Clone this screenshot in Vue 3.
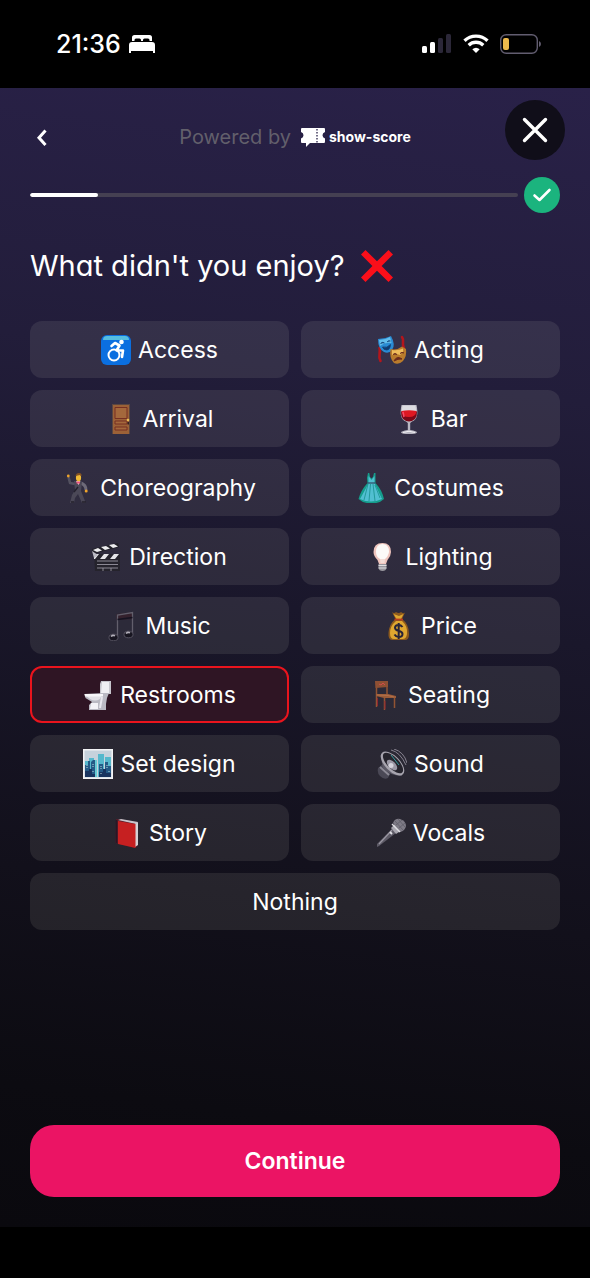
<template>
  <div class="screen">
    <div class="status-bar">
      <div class="status-left">
        <span class="time">21:36</span>
        <svg width="26" height="20" viewBox="0 0 26 20" fill="#fff" aria-hidden="true">
          <path d="M3 7V3.500Q3 1 5.500 1H20.500Q23 1 23 3.500V7H20.500V6Q20.500 4.500 19 4.500H15.500Q14 4.500 14 6V7H12V6Q12 4.500 10.500 4.500H7Q5.500 4.500 5.500 6V7Z" />
          <path d="M0 11Q0 8 3 8H23Q26 8 26 11V19H24V17H2V19H0Z" />
        </svg>
      </div>
      <div class="status-right">
        <svg width="30" height="20" viewBox="0 0 30 20" aria-hidden="true">
          <rect x="0" y="12" width="5" height="7" rx="1.500" fill="#fff" />
          <rect x="8" y="8" width="5" height="11" rx="1.500" fill="#fff" />
          <rect x="16" y="4" width="5" height="15" rx="1.500" fill="#2b2738" />
          <rect x="24" y="0" width="5" height="19" rx="1.500" fill="#2b2738" />
        </svg>
        <svg width="26" height="20" viewBox="0 0 26 20" fill="none" stroke="#fff" stroke-width="3.300" aria-hidden="true">
          <path d="M1.500 6.700A16.500 16.500 0 0 1 24.500 6.700" />
          <path d="M5.700 11.200A10.500 10.500 0 0 1 20.300 11.200" />
          <path d="M13 19L9.300 15.300Q13 12 16.700 15.300Z" fill="#fff" stroke="none" />
        </svg>
        <svg width="42" height="20" viewBox="0 0 42 20" aria-hidden="true">
          <rect x="0.700" y="0.700" width="36.600" height="18.600" rx="5.500" fill="none" stroke="#625d70" stroke-width="1.400" />
          <rect x="3" y="4" width="6" height="12" rx="2" fill="#edb94c" />
          <path d="M39 7Q41 8 41 10T39 13Z" fill="#625d70" />
        </svg>
      </div>
    </div>

    <main class="survey">
      <header class="survey-header">
        <button class="back" type="button" aria-label="Back">
          <svg width="32" height="46" viewBox="0 0 32 46" fill="none" stroke="#fff" stroke-width="3">
            <path d="M15.500 16.500L9 23.800L15.500 31" />
          </svg>
        </button>
        <div class="brand">
          <span class="powered">Powered by</span>
          <svg width="24" height="20" viewBox="0 0 24 20" aria-hidden="true">
            <path fill="#fff" d="M1 1H23Q24 1 24 2V5Q21.500 6 21.500 8.200T24 11.500V14.500Q24 16 23 16H9L5 20V16H1Q0 16 0 15V11.500Q2.500 10.500 2.500 8.200T0 5V2Q0 1 1 1Z" />
            <path d="M16 2V16" stroke="#292148" stroke-width="1.300" stroke-dasharray="1.500 1.500" />
          </svg>
          <span class="brand-name">show-score</span>
        </div>
        <button class="close" type="button" aria-label="Close">
          <svg width="60" height="60" viewBox="0 0 60 60" fill="none" stroke="#fff" stroke-width="3.400" stroke-linecap="round">
            <path d="M19.500 19.500L40.500 40.500M40.500 19.500L19.500 40.500" />
          </svg>
        </button>
      </header>

      <div class="progress">
        <div class="track">
          <div class="track-fill" :style="{ width: progress + '%' }"></div>
        </div>
        <svg width="36" height="36" viewBox="0 0 36 36" aria-hidden="true">
          <circle cx="18" cy="18" r="18" fill="#1bb47e" />
          <path d="M10.500 18.500L15.500 23L25.500 13" fill="none" stroke="#fff" stroke-width="2.600" stroke-linecap="round" stroke-linejoin="round" />
        </svg>
      </div>

      <h1 class="question">
        What didn't you enjoy?
        <svg width="34" height="34" viewBox="0 0 34 34" aria-hidden="true">
          <path d="M5.500 1L17 12.300L28.500 1L33 5.500L21.600 17L33 28.500L28.500 33L17 21.700L5.500 33L1 28.500L12.400 17L1 5.500Z" fill="#fa0f1a" />
        </svg>
      </h1>

      <div class="options">
        <button
          v-for="option in options"
          :key="option.label"
          type="button"
          class="option"
          :class="{ selected: selected.includes(option.label), wide: !option.icon }"
          :aria-pressed="selected.includes(option.label)"
          @click="toggle(option.label)"
        >
          <svg v-if="option.icon" width="30" height="30" viewBox="0 0 30 30" aria-hidden="true" v-html="option.icon"></svg>
          <span>{{ option.label }}</span>
        </button>
      </div>

      <button class="continue" type="button">Continue</button>
    </main>
  </div>
</template>

<script setup>
import { ref } from 'vue'

const progress = 14
const selected = ref(['Restrooms'])

const options = [
  {
    label: 'Access',
    icon: `<rect width="30" height="30" rx="6" fill="#0b6fe0"/>
      <path d="M2 5Q2 1 6 1H24Q28 1 28 5Z" fill="#55bde0"/>
      <circle cx="20.500" cy="7" r="2.300" fill="#fff"/>
      <circle cx="13" cy="20" r="5.500" fill="none" stroke="#fff" stroke-width="2"/>
      <path d="M10.500 11L14 8L18.500 10.500L15.500 15.500H22L21 22" fill="none" stroke="#fff" stroke-width="2.600" stroke-linecap="round" stroke-linejoin="round"/>`,
  },
  {
    label: 'Acting',
    icon: `<path d="M2.500 13C4 18 .5 21 3.500 26M25 2C28 6 24 9 27 13" fill="none" stroke="#b3161c" stroke-width="2.600" stroke-linecap="round"/>
      <path d="M1 4Q8 4 14 1Q19 10 15 15Q12 19 7 17Q1 14 1 4Z" fill="#2a8bd3"/>
      <path d="M2 5Q8 5 13 2Q14 5 14.500 8Q8 7 3 11Z" fill="#62bdeb"/>
      <path d="M3.500 8.500Q5.500 6.500 7.500 8M10 7Q11.500 5 13.500 6M5.500 12Q10 13.500 13.500 9.500Q13 15 9.500 15Q6.500 15 5.500 12Z" fill="#103c72" stroke="#103c72" stroke-width=".8"/>
      <path d="M13.500 14Q20 15.500 25 11.500L29 14Q30 21 26 26Q22 30 17 28Q12 23 13.500 14Z" fill="#b97b2c"/>
      <path d="M15 15Q21 16 26 13.500Q27 18 23 20Q18 18 15 20Z" fill="#efbc5b"/>
      <path d="M16 19.500Q18 17.500 20 19.500M23 18.500Q25 16.500 27 18M17 26Q20 20 25 24Q21 23.500 17 26Z" fill="#6b2b1c" stroke="#6b2b1c" stroke-width="1"/>`,
  },
  {
    label: 'Arrival',
    icon: `<rect x="6" y="0" width="18" height="30" fill="#5b4640"/>
      <rect x="7" y="1" width="16" height="29" fill="#9c6137"/>
      <path d="M9 3.500H21V14.500H9ZM9 17H21V20H9ZM9 23H21V26H9Z" fill="#a4683c" stroke="#762f22" stroke-width="1"/>
      <circle cx="22" cy="16" r="1.300" fill="#edbe55"/><rect x="21.500" y="18" width="1.500" height="2.500" fill="#351f22"/>`,
  },
  {
    label: 'Bar',
    icon: `<path d="M7.500 1H22.500Q25.500 15 18 17.500L16.200 19V26Q23 27 23 28.500Q22 30 15 30T7 28.500Q7 27 13.800 26V19L12 17.500Q4.500 15 7.500 1Z" fill="#b9b7c2"/>
      <path d="M8.500 1.500H21.500L22.300 7H7.700Z" fill="#dddce1"/>
      <path d="M7 7.500H23Q23.500 16.500 15 17.500Q6.500 16.500 7 7.500Z" fill="#7c0818"/>
      <path d="M7.500 7Q15 5.500 22.500 7Q22 13 15 13T7.500 7Z" fill="#de1822"/>
      <path d="M9 8L10 13" stroke="#fa4a69" stroke-width="1.500"/><path d="M9 28.500Q15 26 21 28.500" stroke="#f4f3f7" fill="none"/>`,
  },
  {
    label: 'Choreography',
    icon: `<path d="M12 11L7 10L5.500 4" fill="none" stroke="#53515f" stroke-width="2.600" stroke-linejoin="round"/>
      <path d="M18 10Q23 12 23 17" fill="none" stroke="#6d6a78" stroke-width="3"/>
      <path d="M11 8L19 9L18 18L22 28L23 30H19L15 21L12 25L11 30H7L9 22L12 17Z" fill="#4b4857"/>
      <path d="M13 8H17.500L15.500 12Z" fill="#f4cfda"/><path d="M13.500 9.500H17" stroke="#e9527d" stroke-width="2"/>
      <ellipse cx="15.500" cy="4.700" rx="2.600" ry="3.500" fill="#efb936"/>
      <path d="M12.500 3Q13 0 16 0T18.500 3L17 2Z" fill="#855222"/>
      <circle cx="5.300" cy="3" r="1.400" fill="#efa42b"/><circle cx="23.200" cy="18" r="1.500" fill="#efa42b"/>
      <path d="M11 19L15 14M8 29H11M19 29H23" stroke="#24212d" stroke-width="1.400"/>`,
  },
  {
    label: 'Costumes',
    icon: `<path d="M11 0H12.300L13 4L14.500 5.500L16 4L17 0H18.500V10Q25 17 27 26Q22 31 14.500 30Q7 31 1.500 26Q4 17 10.500 10L10 5Z" fill="#159d8c"/>
      <path d="M11.500 3L14.500 7L17.500 3V10L23 22L25 26Q14 31 3 26L8 17L11.500 10Z" fill="#51bfd1"/>
      <path d="M11 11L7 27M13.500 11L12 28M16 11L18 28M18 12L23 25" stroke="#178f8d" stroke-width=".8"/>
      <path d="M10.500 10H18.500" stroke="#30516b" stroke-width="1.300"/>`,
  },
  {
    label: 'Direction',
    icon: `<path d="M0 7L26 1L27 5L1 12Z" fill="#23222a"/>
      <path d="M1 8L6 6L10 8.500L5 10ZM9 5L14 4L18 6.500L13 8ZM17 3L22 2L26 4.500L21 6Z" fill="#eeeef0"/>
      <path d="M2 12H28V29H3Z" fill="#25232c"/>
      <path d="M2 12H7L3 17H2ZM12 12H17L13 17H8ZM22 12H27L23 17H18Z" fill="#e5e5e8"/>
      <path d="M0 9L6 13L2 16Z" fill="#bbbac3"/>
      <path d="M5 19H26M5 22.500H26M5 26H26M11 26V29M19 26V29" stroke="#97949f" stroke-width=".9"/>`,
  },
  {
    label: 'Lighting',
    icon: `<path d="M14.500 1Q23 1 23 10Q23 14 19.500 18L18 22H11L9.500 18Q5.500 14 5.500 10Q5.500 1 14.500 1Z" fill="#efc5be"/>
      <path d="M14.500 2Q21 2 21 10Q20 15 17 17H12Q8 15 8 10Q8 2 14.500 2Z" fill="#fcfaf8"/>
      <path d="M12 17H17L16.500 21H12.500Z" fill="#f3dcd6"/>
      <path d="M10.500 22H18.500V26Q18 29 14.500 29T10.500 26Z" fill="#98969d"/><path d="M10.500 23.500H18.500M10.500 26H18.500" stroke="#dedde1" stroke-width="1"/>`,
  },
  {
    label: 'Music',
    icon: `<path d="M8.500 3L25 1V8L8.500 9Z" fill="#34212d"/>
      <path d="M9.500 26V4L24.500 1.500V23" fill="none" stroke="#625f6c" stroke-width="1.300"/>
      <path d="M9.500 8.500L24.500 6.500" stroke="#151321" stroke-width="1.500"/>
      <ellipse cx="5.500" cy="26.500" rx="4.500" ry="3.300" fill="#171520" stroke="#555260"/>
      <ellipse cx="20.500" cy="23.500" rx="4.500" ry="3.300" fill="#171520" stroke="#555260"/>
      <path d="M3 25.500Q5 23.500 7 25M18 22.500Q20 20.500 22 22" fill="none" stroke="#b4b1bb" stroke-width="1.500"/>`,
  },
  {
    label: 'Price',
    icon: `<path d="M8 1Q10 3 12 1Q15 3 17 1Q19 3 21 1.500L18 8Q25 13 25 23Q25 29 21 29H8Q4 29 4.500 22Q5 13 11.500 8Z" fill="#8d5a1d"/>
      <path d="M9.500 3L12.500 8H17L19.500 3L15 5ZM12 10H18Q23.500 15 23 22Q23 27.500 19 28H10Q6 28 6 22Q6 15 12 10Z" fill="#dfa730"/>
      <path d="M10.500 8.500H19" stroke="#b83b1f" stroke-width="1.800"/>
      <path d="M18.500 16Q17 14 14.500 14Q11 14 11 16.800Q11 19 14.700 20Q18.500 20.800 18.500 23Q18.500 26 14.700 26Q12 26 10.500 23.500M14.700 12V28" fill="none" stroke="#282438" stroke-width="2"/>`,
  },
  {
    label: 'Restrooms',
    icon: `<path d="M18 1H28V14H17V4Z" fill="#c7c6cd"/><path d="M19 2H26V13H18Z" fill="#f0eff3"/>
      <path d="M20 13H26L24 18L23 24V30H6V25L9 22L2.500 18L1.500 14Z" fill="#bab9c3"/>
      <path d="M2 15H19L17 19Q12 22 7 19Z" fill="#e2e1e7"/>
      <path d="M1.500 14H20V16.500H2Z" fill="#f8f7fa"/>
      <path d="M8 23H15V29H7Z" fill="#f3f2f7"/><path d="M19 17L17 28" stroke="#e8e7ee" stroke-width="2"/>`,
  },
  {
    label: 'Seating',
    icon: `<path d="M5.500 1.500V27M16 1.500V15M13.500 18V30M23.500 16V28" fill="none" stroke="#925433" stroke-width="1.500"/>
      <path d="M4 1H17V7L4.500 8Z" fill="#8e5033"/><path d="M5 14H17L25 16V18L13 18L5 16Z" fill="#9c5c38"/>
      <path d="M6 15L17 15.500L23 17" fill="none" stroke="#b1714b"/>
      <path d="M8 4L10 5L12 3L14 5" fill="none" stroke="#d14b4a"/><path d="M6.500 18V26M14 21V29" stroke="#8e2531" stroke-width="1"/>`,
  },
  {
    label: 'Set design',
    icon: `<rect width="30" height="30" fill="#f2f3f5"/><rect x="1.500" y="1.500" width="27" height="27" fill="#c6d2dc"/>
      <path d="M2 12H6V9H11V28H2ZM15 5H21V28H15ZM22 8H28V28H22Z" fill="#55b8cc"/>
      <path d="M2 16H5V12H7V28H2ZM8 13L10 11H12V28H8ZM16 15H20V28H16ZM22 13H25V17H28V28H22Z" fill="#245a86"/>
      <path d="M2 22H6V20H9V25H13V28H2ZM16 23H20V20H23V24H28V28H16Z" fill="#19345f"/>
      <path d="M4 16V19M10 15V18M18 17V20M24 16V19M10 22V24M18 24V26M26 22V24" stroke="#b8d9dc" stroke-width="1" stroke-dasharray="1 1"/>
      <path d="M13 11V28" stroke="#67cad3" stroke-width="2"/>`,
  },
  {
    label: 'Sound',
    icon: `<path d="M1 19L6 15L14 23L11 29Q7 31 3 27Q0 24 1 19Z" fill="#4a4855"/>
      <path d="M3 18L12 26" stroke="#8c8995" stroke-width="2"/>
      <path d="M3.500 6L6 19Q12 26 25 27L20 17Z" fill="#5d5a67"/>
      <ellipse cx="15.500" cy="14.500" rx="15" ry="7.500" transform="rotate(46 15.500 14.500)" fill="#a7a4ae"/>
      <ellipse cx="16" cy="14" rx="13.200" ry="5.800" transform="rotate(46 16 14)" fill="#26242d"/>
      <ellipse cx="15" cy="16" rx="6.500" ry="3.500" transform="rotate(46 15 16)" fill="#9b98a5"/>
      <circle cx="14" cy="16.500" r="2.500" fill="#d5d3dc"/>
      <path d="M14 1Q23 3 29 16M17 0Q27 3 30 14" fill="none" stroke="#85818e" stroke-width="1"/>
      <path d="M14 6L22 16" stroke="#369a9d" stroke-width="1"/>`,
  },
  {
    label: 'Story',
    icon: `<path d="M4 1L6 1L26 4V28L23 30L3.500 25Z" fill="#511c29"/>
      <path d="M6 2L9 1L26 4L24 6Z" fill="#c8c4cb"/><path d="M23 6L26 4V27L23 29Z" fill="#d4d1d5"/>
      <path d="M6 3L23.500 6V30L6 26Z" fill="#c62021"/><path d="M4.500 2V25" stroke="#281725" stroke-width="1.500"/>`,
  },
  {
    label: 'Vocals',
    icon: `<path d="M16 11L20 15L3 28L1 29L1 26Z" fill="#5e5b67"/>
      <path d="M16 12L3 26" stroke="#9a97a2" stroke-width="1.200"/>
      <path d="M15 10L20 5L26 12L20 16Z" fill="#a8a6af"/>
      <path d="M17 5Q19 0 24 1Q30 3 30 8Q29 13 24 14Z" fill="#7e7b86"/>
      <path d="M19 3L27 12M22 1L29 9M20 7L26 2M23 10L29 5" stroke="#605e68" stroke-width=".8"/>
      <path d="M16 6L24 14" stroke="#e0dfe4" stroke-width="1.500"/>
      <path d="M14 14L16 16" stroke="#e3e2e6" stroke-width="1.800"/>`,
  },
  { label: 'Nothing' },
]

function toggle(label) {
  const index = selected.value.indexOf(label)
  if (index === -1) {
    selected.value.push(label)
  } else {
    selected.value.splice(index, 1)
  }
}
</script>

<style>
body {
  background: #000;
}
</style>

<style scoped>
.screen {
  min-height: 100vh;
  display: flex;
  flex-direction: column;
  box-sizing: border-box;
  padding-bottom: 51px;
  background: #000;
  color: #fff;
  font-family: Inter, "Liberation Sans", sans-serif;
}

button {
  border: 0;
  padding: 0;
  color: inherit;
  font-family: inherit;
  cursor: pointer;
}

svg {
  display: block;
  flex-shrink: 0;
}

.status-bar {
  height: 88px;
  display: flex;
  align-items: center;
  justify-content: space-between;
  padding: 0 48px 0 56px;
}

.status-left {
  display: flex;
  align-items: center;
  gap: 8px;
}

.time {
  font-size: 25px;
  font-weight: 500;
}

.status-right {
  display: flex;
  align-items: center;
  gap: 11px;
}

.survey {
  flex: 1;
  display: flex;
  flex-direction: column;
  padding: 12px 30px 30px;
  background: linear-gradient(187deg, #292148 0%, #221d3a 26%, #1a172b 46%, #12101b 70%, #0c0b11 88%, #0a090e 100%);
}

.survey-header {
  display: grid;
  grid-template-columns: 1fr auto 1fr;
  align-items: end;
  margin: 0 -5px 17px;
}

.back {
  width: 32px;
  height: 46px;
  margin-left: 5px;
  background: none;
}

.brand {
  height: 46px;
  display: flex;
  align-items: center;
}

/* cv11 is Inter's single-storey a */
.powered {
  margin-right: 10px;
  color: #625f6b;
  font-size: 20px;
  line-height: 24px;
  font-feature-settings: "cv11";
}

.brand-name {
  margin-left: 4px;
  font-size: 14px;
  font-weight: 700;
  line-height: 24px;
}

.close {
  justify-self: end;
  width: 60px;
  height: 60px;
  border-radius: 50%;
  background: #100e19;
}

.progress {
  display: flex;
  align-items: center;
  gap: 6px;
}

.track {
  flex: 1;
  height: 4px;
  border-radius: 2px;
  background: #454052;
  overflow: hidden;
}

.track-fill {
  height: 100%;
  border-radius: 2px;
  background: #fff;
}

.question {
  display: flex;
  align-items: center;
  gap: 15px;
  margin: 36px 0 38px;
  font-size: 29px;
  font-weight: 400;
  line-height: 34px;
  font-feature-settings: "cv11";
}

.options {
  display: grid;
  grid-template-columns: 1fr 1fr;
  gap: 12px;
  margin-bottom: 30px;
}

.option {
  height: 57px;
  display: flex;
  align-items: center;
  justify-content: center;
  gap: 7px;
  border-radius: 12px;
  background: rgba(245, 245, 225, 0.09);
  font-size: 23px;
}

.option.selected {
  border: 2px solid #ea141d;
  background: #2f1524;
}

.option.wide {
  grid-column: 1 / -1;
}

.continue {
  height: 72px;
  margin-top: auto;
  border-radius: 24px;
  background: #eb1464;
  font-size: 23px;
  font-weight: 600;
}
</style>
